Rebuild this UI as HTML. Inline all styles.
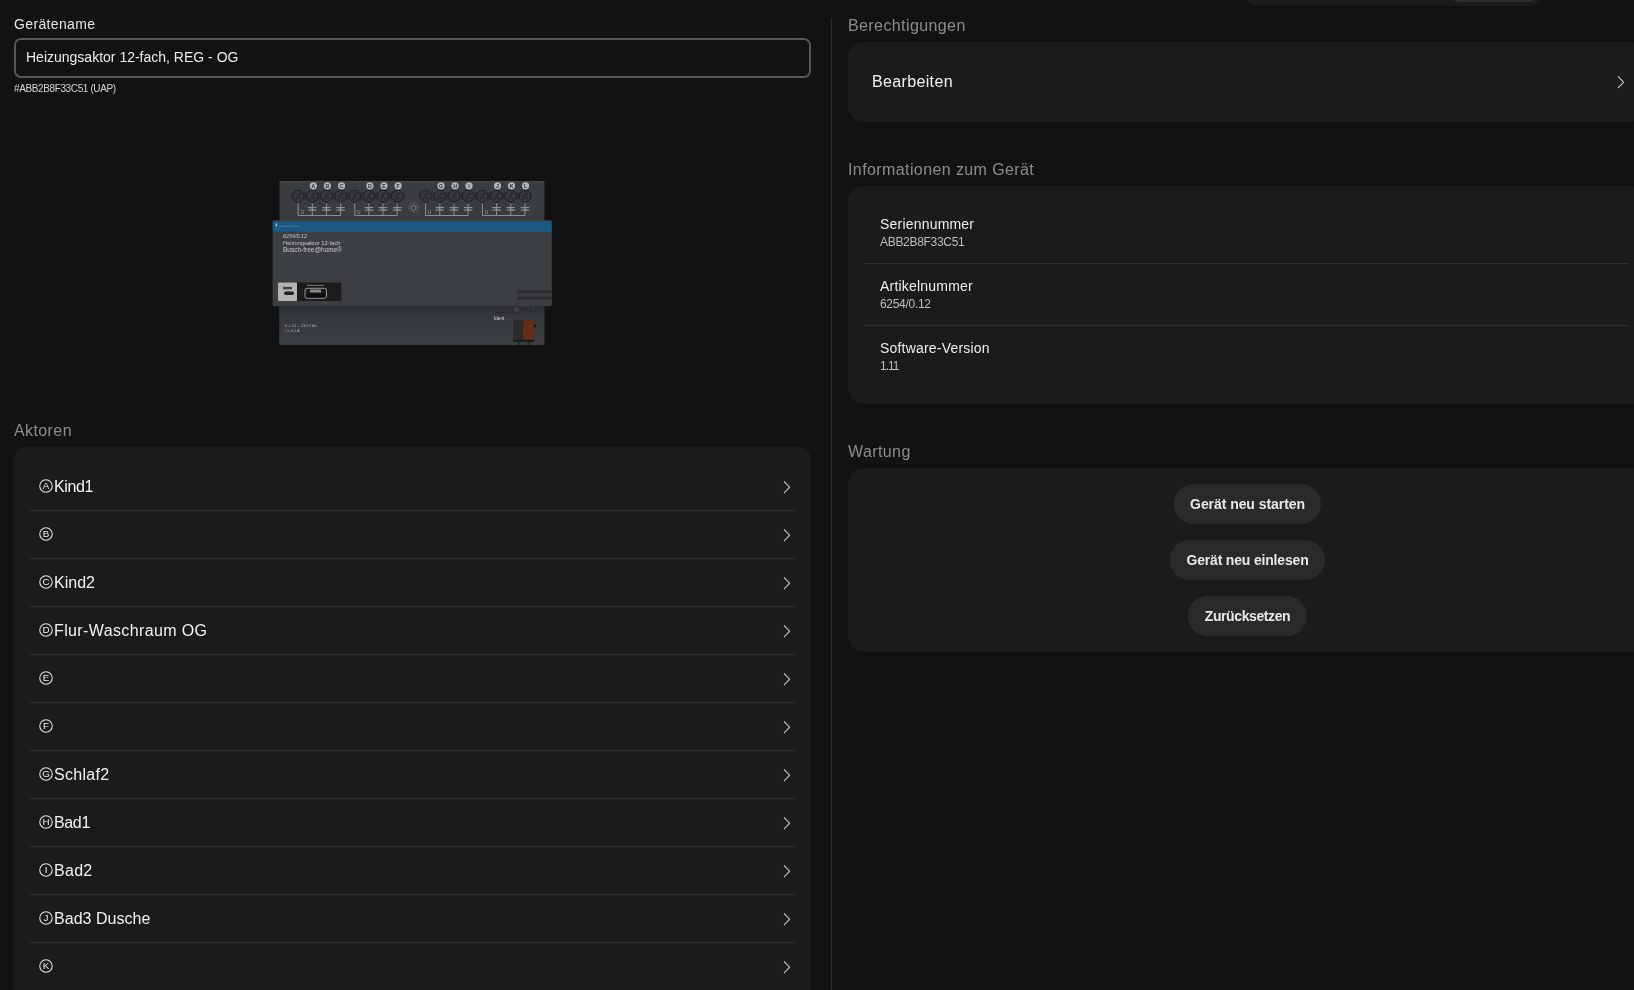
<!DOCTYPE html>
<html><head><meta charset="utf-8">
<style>
*{margin:0;padding:0;box-sizing:border-box}
html,body{width:1634px;height:990px;overflow:hidden;background:#121212;-webkit-font-smoothing:antialiased;font-family:"Liberation Sans",sans-serif;color:#eeeeee}
.abs{position:absolute}
.lbl{position:absolute;font-size:16px;color:#8c8c8c;white-space:nowrap;line-height:1;letter-spacing:0.4px}
.card{position:absolute;background:#1b1b1b;border-radius:16px}
.sep{position:absolute;height:1px;background:#2f2f2f}
.row{position:absolute;left:54px;font-size:16px;color:#f2f2f2;white-space:nowrap;line-height:1}
.btn{position:absolute;height:40px;border-radius:20px;background:#2a2a2a;color:#e8e8e8;font-size:14px;font-weight:bold;line-height:40px;text-align:center;white-space:nowrap}
.t1{position:absolute;left:880px;font-size:14px;color:#eeeeee;white-space:nowrap;line-height:1;letter-spacing:0.2px}
.t2{position:absolute;left:880px;font-size:12px;color:#bdbdbd;white-space:nowrap;line-height:1;letter-spacing:-0.3px}
</style></head><body>
<div id="wrap" style="position:absolute;left:0;top:0;width:1634px;height:990px;will-change:transform">
<div class="abs" style="left:1243px;top:-40px;width:300px;height:46px;border-radius:14px;background:#1a1a1a"></div>
<div class="abs" style="left:1449px;top:-30px;width:90px;height:32px;border-radius:10px;background:#2c2c2c"></div>
<div class="lbl" style="left:14px;top:17px;color:#e6e6e6;font-size:14px;letter-spacing:0.35px">Gerätename</div>
<div class="abs" style="left:14px;top:38px;width:797px;height:40px;border:2px solid #565656;border-radius:7px"></div>
<div class="abs" style="left:26px;top:50px;font-size:14px;color:#ececec;white-space:nowrap;line-height:1">Heizungsaktor 12-fach, REG - OG</div>
<div class="abs" style="left:14px;top:84px;font-size:10px;color:#d4d4d4;white-space:nowrap;line-height:1;letter-spacing:-0.38px">#ABB2B8F33C51 (UAP)</div>
<svg class="abs" style="left:260px;top:170px" width="300" height="185" viewBox="260 170 300 185">
<defs><linearGradient id="gb" x1="0" y1="0" x2="0" y2="1"><stop offset="0" stop-color="#2c2f31"/><stop offset="0.18" stop-color="#2e3133"/><stop offset="0.45" stop-color="#373a3d"/><stop offset="1" stop-color="#3b3e41"/></linearGradient><linearGradient id="gt" x1="0" y1="0" x2="0" y2="1"><stop offset="0" stop-color="#3a3d40"/><stop offset="1" stop-color="#393c3f"/></linearGradient></defs>
<rect x="279.6" y="180.9" width="264.8" height="42" rx="1.5" fill="url(#gt)"/>
<rect x="279.6" y="181" width="264.8" height="1.5" fill="#45484b"/>
<rect x="279.2" y="300" width="265.2" height="45" rx="1.5" fill="url(#gb)"/>
<rect x="291" y="192.6" width="114.5" height="7" rx="3" fill="#2e3032"/>
<rect x="419" y="192.6" width="113" height="7" rx="3" fill="#2e3032"/>
<circle cx="298.2" cy="196.1" r="5.8" fill="#36383a" stroke="#1f2123" stroke-width="1"/>
<path d="M295.6 199.8 L299.2 193.6 H301.2" fill="none" stroke="#1d1f21" stroke-width="1"/>
<path d="M298.7 197 L300.7 199.5" stroke="#1d1f21" stroke-width="0.9"/>
<circle cx="312.3" cy="196.1" r="5.8" fill="#36383a" stroke="#1f2123" stroke-width="1"/>
<path d="M309.7 199.8 L313.3 193.6 H315.3" fill="none" stroke="#1d1f21" stroke-width="1"/>
<path d="M312.8 197 L314.8 199.5" stroke="#1d1f21" stroke-width="0.9"/>
<circle cx="326.5" cy="196.1" r="5.8" fill="#36383a" stroke="#1f2123" stroke-width="1"/>
<path d="M323.9 199.8 L327.5 193.6 H329.5" fill="none" stroke="#1d1f21" stroke-width="1"/>
<path d="M327.0 197 L329.0 199.5" stroke="#1d1f21" stroke-width="0.9"/>
<circle cx="340.6" cy="196.1" r="5.8" fill="#36383a" stroke="#1f2123" stroke-width="1"/>
<path d="M338.0 199.8 L341.6 193.6 H343.6" fill="none" stroke="#1d1f21" stroke-width="1"/>
<path d="M341.1 197 L343.1 199.5" stroke="#1d1f21" stroke-width="0.9"/>
<circle cx="354.8" cy="196.1" r="5.8" fill="#36383a" stroke="#1f2123" stroke-width="1"/>
<path d="M352.2 199.8 L355.8 193.6 H357.8" fill="none" stroke="#1d1f21" stroke-width="1"/>
<path d="M355.3 197 L357.3 199.5" stroke="#1d1f21" stroke-width="0.9"/>
<circle cx="368.9" cy="196.1" r="5.8" fill="#36383a" stroke="#1f2123" stroke-width="1"/>
<path d="M366.3 199.8 L369.9 193.6 H371.9" fill="none" stroke="#1d1f21" stroke-width="1"/>
<path d="M369.4 197 L371.4 199.5" stroke="#1d1f21" stroke-width="0.9"/>
<circle cx="383.0" cy="196.1" r="5.8" fill="#36383a" stroke="#1f2123" stroke-width="1"/>
<path d="M380.4 199.8 L384.0 193.6 H386.0" fill="none" stroke="#1d1f21" stroke-width="1"/>
<path d="M383.5 197 L385.5 199.5" stroke="#1d1f21" stroke-width="0.9"/>
<circle cx="397.2" cy="196.1" r="5.8" fill="#36383a" stroke="#1f2123" stroke-width="1"/>
<path d="M394.6 199.8 L398.2 193.6 H400.2" fill="none" stroke="#1d1f21" stroke-width="1"/>
<path d="M397.7 197 L399.7 199.5" stroke="#1d1f21" stroke-width="0.9"/>
<circle cx="425.6" cy="196.1" r="5.8" fill="#36383a" stroke="#1f2123" stroke-width="1"/>
<path d="M423.0 199.8 L426.6 193.6 H428.6" fill="none" stroke="#1d1f21" stroke-width="1"/>
<path d="M426.1 197 L428.1 199.5" stroke="#1d1f21" stroke-width="0.9"/>
<circle cx="439.8" cy="196.1" r="5.8" fill="#36383a" stroke="#1f2123" stroke-width="1"/>
<path d="M437.2 199.8 L440.8 193.6 H442.8" fill="none" stroke="#1d1f21" stroke-width="1"/>
<path d="M440.3 197 L442.3 199.5" stroke="#1d1f21" stroke-width="0.9"/>
<circle cx="454.0" cy="196.1" r="5.8" fill="#36383a" stroke="#1f2123" stroke-width="1"/>
<path d="M451.4 199.8 L455.0 193.6 H457.0" fill="none" stroke="#1d1f21" stroke-width="1"/>
<path d="M454.5 197 L456.5 199.5" stroke="#1d1f21" stroke-width="0.9"/>
<circle cx="468.2" cy="196.1" r="5.8" fill="#36383a" stroke="#1f2123" stroke-width="1"/>
<path d="M465.6 199.8 L469.2 193.6 H471.2" fill="none" stroke="#1d1f21" stroke-width="1"/>
<path d="M468.7 197 L470.7 199.5" stroke="#1d1f21" stroke-width="0.9"/>
<circle cx="482.4" cy="196.1" r="5.8" fill="#36383a" stroke="#1f2123" stroke-width="1"/>
<path d="M479.8 199.8 L483.4 193.6 H485.4" fill="none" stroke="#1d1f21" stroke-width="1"/>
<path d="M482.9 197 L484.9 199.5" stroke="#1d1f21" stroke-width="0.9"/>
<circle cx="496.6" cy="196.1" r="5.8" fill="#36383a" stroke="#1f2123" stroke-width="1"/>
<path d="M494.0 199.8 L497.6 193.6 H499.6" fill="none" stroke="#1d1f21" stroke-width="1"/>
<path d="M497.1 197 L499.1 199.5" stroke="#1d1f21" stroke-width="0.9"/>
<circle cx="510.8" cy="196.1" r="5.8" fill="#36383a" stroke="#1f2123" stroke-width="1"/>
<path d="M508.2 199.8 L511.8 193.6 H513.8" fill="none" stroke="#1d1f21" stroke-width="1"/>
<path d="M511.3 197 L513.3 199.5" stroke="#1d1f21" stroke-width="0.9"/>
<circle cx="525.0" cy="196.1" r="5.8" fill="#36383a" stroke="#1f2123" stroke-width="1"/>
<path d="M522.4 199.8 L526.0 193.6 H528.0" fill="none" stroke="#1d1f21" stroke-width="1"/>
<path d="M525.5 197 L527.5 199.5" stroke="#1d1f21" stroke-width="0.9"/>
<circle cx="313.4" cy="185.8" r="3.6" fill="#b4b5b6"/>
<text x="313.4" y="187.9" text-anchor="middle" font-family="Liberation Sans" font-weight="bold" font-size="5.2" fill="#2e3032">A</text>
<circle cx="327.4" cy="185.8" r="3.6" fill="#b4b5b6"/>
<text x="327.4" y="187.9" text-anchor="middle" font-family="Liberation Sans" font-weight="bold" font-size="5.2" fill="#2e3032">B</text>
<circle cx="341.6" cy="185.8" r="3.6" fill="#b4b5b6"/>
<text x="341.6" y="187.9" text-anchor="middle" font-family="Liberation Sans" font-weight="bold" font-size="5.2" fill="#2e3032">C</text>
<circle cx="369.9" cy="185.8" r="3.6" fill="#b4b5b6"/>
<text x="369.9" y="187.9" text-anchor="middle" font-family="Liberation Sans" font-weight="bold" font-size="5.2" fill="#2e3032">D</text>
<circle cx="384" cy="185.8" r="3.6" fill="#b4b5b6"/>
<text x="384" y="187.9" text-anchor="middle" font-family="Liberation Sans" font-weight="bold" font-size="5.2" fill="#2e3032">E</text>
<circle cx="398.1" cy="185.8" r="3.6" fill="#b4b5b6"/>
<text x="398.1" y="187.9" text-anchor="middle" font-family="Liberation Sans" font-weight="bold" font-size="5.2" fill="#2e3032">F</text>
<circle cx="441" cy="185.8" r="3.6" fill="#b4b5b6"/>
<text x="441" y="187.9" text-anchor="middle" font-family="Liberation Sans" font-weight="bold" font-size="5.2" fill="#2e3032">G</text>
<circle cx="455" cy="185.8" r="3.6" fill="#b4b5b6"/>
<text x="455" y="187.9" text-anchor="middle" font-family="Liberation Sans" font-weight="bold" font-size="5.2" fill="#2e3032">H</text>
<circle cx="469" cy="185.8" r="3.6" fill="#b4b5b6"/>
<text x="469" y="187.9" text-anchor="middle" font-family="Liberation Sans" font-weight="bold" font-size="5.2" fill="#2e3032">I</text>
<circle cx="497.5" cy="185.8" r="3.6" fill="#b4b5b6"/>
<text x="497.5" y="187.9" text-anchor="middle" font-family="Liberation Sans" font-weight="bold" font-size="5.2" fill="#2e3032">J</text>
<circle cx="511.5" cy="185.8" r="3.6" fill="#b4b5b6"/>
<text x="511.5" y="187.9" text-anchor="middle" font-family="Liberation Sans" font-weight="bold" font-size="5.2" fill="#2e3032">K</text>
<circle cx="525.6" cy="185.8" r="3.6" fill="#b4b5b6"/>
<text x="525.6" y="187.9" text-anchor="middle" font-family="Liberation Sans" font-weight="bold" font-size="5.2" fill="#2e3032">L</text>
<path d="M298.2 203.5 V215.5 H340.6" fill="none" stroke="#9fa1a3" stroke-width="0.8"/>
<path d="M312.3 203.5 V215.5" stroke="#9fa1a3" stroke-width="0.8"/>
<path d="M308.0 207.6 H316.6 M308.0 210.2 H316.6" stroke="#9fa1a3" stroke-width="0.9"/>
<path d="M309.8 208.6 L314.8 209.4" stroke="#9fa1a3" stroke-width="0.5"/>
<path d="M326.5 203.5 V215.5" stroke="#9fa1a3" stroke-width="0.8"/>
<path d="M322.2 207.6 H330.8 M322.2 210.2 H330.8" stroke="#9fa1a3" stroke-width="0.9"/>
<path d="M324.0 208.6 L329.0 209.4" stroke="#9fa1a3" stroke-width="0.5"/>
<path d="M340.6 203.5 V215.5" stroke="#9fa1a3" stroke-width="0.8"/>
<path d="M336.3 207.6 H344.9 M336.3 210.2 H344.9" stroke="#9fa1a3" stroke-width="0.9"/>
<path d="M338.1 208.6 L343.1 209.4" stroke="#9fa1a3" stroke-width="0.5"/>
<text x="300.7" y="213.5" font-family="Liberation Sans" font-size="4.5" fill="#9fa1a3">U</text>
<path d="M354.8 203.5 V215.5 H397.2" fill="none" stroke="#9fa1a3" stroke-width="0.8"/>
<path d="M368.9 203.5 V215.5" stroke="#9fa1a3" stroke-width="0.8"/>
<path d="M364.6 207.6 H373.2 M364.6 210.2 H373.2" stroke="#9fa1a3" stroke-width="0.9"/>
<path d="M366.4 208.6 L371.4 209.4" stroke="#9fa1a3" stroke-width="0.5"/>
<path d="M383.0 203.5 V215.5" stroke="#9fa1a3" stroke-width="0.8"/>
<path d="M378.7 207.6 H387.3 M378.7 210.2 H387.3" stroke="#9fa1a3" stroke-width="0.9"/>
<path d="M380.5 208.6 L385.5 209.4" stroke="#9fa1a3" stroke-width="0.5"/>
<path d="M397.2 203.5 V215.5" stroke="#9fa1a3" stroke-width="0.8"/>
<path d="M392.9 207.6 H401.5 M392.9 210.2 H401.5" stroke="#9fa1a3" stroke-width="0.9"/>
<path d="M394.7 208.6 L399.7 209.4" stroke="#9fa1a3" stroke-width="0.5"/>
<text x="357.3" y="213.5" font-family="Liberation Sans" font-size="4.5" fill="#9fa1a3">U</text>
<path d="M425.6 203.5 V215.5 H468.2" fill="none" stroke="#9fa1a3" stroke-width="0.8"/>
<path d="M439.8 203.5 V215.5" stroke="#9fa1a3" stroke-width="0.8"/>
<path d="M435.5 207.6 H444.1 M435.5 210.2 H444.1" stroke="#9fa1a3" stroke-width="0.9"/>
<path d="M437.3 208.6 L442.3 209.4" stroke="#9fa1a3" stroke-width="0.5"/>
<path d="M454.0 203.5 V215.5" stroke="#9fa1a3" stroke-width="0.8"/>
<path d="M449.7 207.6 H458.3 M449.7 210.2 H458.3" stroke="#9fa1a3" stroke-width="0.9"/>
<path d="M451.5 208.6 L456.5 209.4" stroke="#9fa1a3" stroke-width="0.5"/>
<path d="M468.2 203.5 V215.5" stroke="#9fa1a3" stroke-width="0.8"/>
<path d="M463.9 207.6 H472.5 M463.9 210.2 H472.5" stroke="#9fa1a3" stroke-width="0.9"/>
<path d="M465.7 208.6 L470.7 209.4" stroke="#9fa1a3" stroke-width="0.5"/>
<text x="428.1" y="213.5" font-family="Liberation Sans" font-size="4.5" fill="#9fa1a3">U</text>
<path d="M482.4 203.5 V215.5 H525.0" fill="none" stroke="#9fa1a3" stroke-width="0.8"/>
<path d="M496.6 203.5 V215.5" stroke="#9fa1a3" stroke-width="0.8"/>
<path d="M492.3 207.6 H500.9 M492.3 210.2 H500.9" stroke="#9fa1a3" stroke-width="0.9"/>
<path d="M494.1 208.6 L499.1 209.4" stroke="#9fa1a3" stroke-width="0.5"/>
<path d="M510.8 203.5 V215.5" stroke="#9fa1a3" stroke-width="0.8"/>
<path d="M506.5 207.6 H515.1 M506.5 210.2 H515.1" stroke="#9fa1a3" stroke-width="0.9"/>
<path d="M508.3 208.6 L513.3 209.4" stroke="#9fa1a3" stroke-width="0.5"/>
<path d="M525.0 203.5 V215.5" stroke="#9fa1a3" stroke-width="0.8"/>
<path d="M520.7 207.6 H529.3 M520.7 210.2 H529.3" stroke="#9fa1a3" stroke-width="0.9"/>
<path d="M522.5 208.6 L527.5 209.4" stroke="#9fa1a3" stroke-width="0.5"/>
<text x="484.9" y="213.5" font-family="Liberation Sans" font-size="4.5" fill="#9fa1a3">U</text>
<circle cx="413.6" cy="207.5" r="4.6" fill="none" stroke="#8e9092" stroke-width="0.7" stroke-dasharray="1 0.8"/>
<circle cx="413.6" cy="207.8" r="2.4" fill="none" stroke="#9a9c9e" stroke-width="0.7"/>
<rect x="272.6" y="220.2" width="279.2" height="86" rx="1.6" fill="#3c3f42"/>
<rect x="272.8" y="221.4" width="278.8" height="10.3" fill="#195a84"/>
<rect x="275.6" y="223.2" width="1.6" height="3.6" rx="0.8" fill="#a9bccb"/>
<path d="M275.6 228.3 L276.4 229.4 L277.2 228.3" fill="none" stroke="#a9bccb" stroke-width="0.4"/>
<path d="M279 226.3 H300" stroke="#6d8ea6" stroke-width="1.1" stroke-dasharray="0.9 0.6 1.4 0.7 0.6 1.2"/>
<text x="283" y="237.6" font-family="Liberation Sans" font-size="5.4" font-style="italic" fill="#c6c7c8">6254/0.12</text>
<text x="283" y="244.6" font-family="Liberation Sans" font-size="5.75" fill="#c6c7c8">Heizungsaktor 12-fach</text>
<text x="283" y="251.6" font-family="Liberation Sans" font-size="6.5" fill="#c6c7c8">Busch-free@home®</text>
<rect x="278" y="282.5" width="63.4" height="18.6" rx="1" fill="#1b1c1d"/>
<rect x="278" y="282.5" width="19" height="18.6" rx="1" fill="#b3b3b3"/>
<rect x="284" y="291.5" width="10" height="3.5" rx="1.7" fill="#202020"/>
<rect x="283" y="286.8" width="9" height="2.5" fill="#444"/>
<rect x="305" y="288.3" width="21.5" height="10" rx="2" fill="#1b1c1d" stroke="#c8c8c8" stroke-width="0.7"/>
<rect x="306.5" y="293.5" width="18.5" height="4" rx="1" fill="#0d0d0d"/>
<rect x="310" y="289.5" width="11" height="3" fill="#8a8a8a"/>
<rect x="307" y="284.8" width="17" height="1.2" fill="#666"/>
<rect x="517" y="290" width="34.5" height="10.4" fill="#3b3e41"/>
<rect x="517" y="290.3" width="34.5" height="3" fill="#2b2d2f"/>
<rect x="517" y="296.6" width="34.5" height="3" fill="#2b2d2f"/>
<path d="M494 312.5 H514" stroke="#2a2c2e" stroke-width="1"/>
<circle cx="516.5" cy="309.5" r="3.8" fill="#3a3d3f" stroke="#222426" stroke-width="0.9"/>
<circle cx="533.2" cy="309.3" r="2.3" fill="#393c3e" stroke="#26282a" stroke-width="0.8"/>
<text x="494" y="319.8" font-family="Liberation Sans" font-size="4.6" fill="#d8d8d8">Ident</text>
<rect x="513.1" y="320.4" width="10.4" height="21.1" fill="#2a2a2a"/>
<rect x="523.3" y="320.4" width="10.7" height="19.5" fill="#6a2a19"/>
<rect x="513.1" y="339.8" width="20.9" height="2" fill="#1a1a1a"/>
<path d="M534 324 L537 326 L534 328 Z" fill="#151515"/>
<rect x="518" y="341.5" width="2.2" height="3.3" fill="#1e2a24"/>
<rect x="527.8" y="341.5" width="2.2" height="3.3" fill="#1e2a24"/>
<path d="M505 326 H512" stroke="#2c2e30" stroke-width="0.5"/>
<text x="284.6" y="326.7" font-family="Liberation Sans" font-size="3.8" fill="#a8aaac">U  = 24 ... 230 V AC</text>
<text x="285.5" y="331.5" font-family="Liberation Sans" font-size="3.8" fill="#a8aaac">I  = 0,5 A</text>
</svg>
<div class="lbl" style="left:14px;top:423px">Aktoren</div>
<div class="card" style="left:14px;top:447px;width:797px;height:600px;border-radius:13px"></div>
<svg class="abs" style="left:37.9px;top:477.6px" width="16" height="16" viewBox="0 0 16 16"><circle cx="8" cy="8" r="6.25" fill="none" stroke="#e8e8e8" stroke-width="1.05"/><text x="8" y="11.3" text-anchor="middle" font-family="Liberation Sans" font-size="9.8" fill="#f0f0f0">A</text></svg>
<div class="row" style="top:479px;letter-spacing:-0.4px">Kind1</div>
<svg class="abs" style="left:783px;top:479.5px" width="9" height="15" viewBox="0 0 9 15"><path d="M1.3 1.7 L6.6 7.3 L1.3 12.7" fill="none" stroke="#cacaca" stroke-width="1.1" stroke-linecap="round" stroke-linejoin="round"/></svg>
<div class="sep" style="left:30px;top:510px;width:765px"></div>
<svg class="abs" style="left:37.9px;top:525.6px" width="16" height="16" viewBox="0 0 16 16"><circle cx="8" cy="8" r="6.25" fill="none" stroke="#e8e8e8" stroke-width="1.05"/><text x="8" y="11.3" text-anchor="middle" font-family="Liberation Sans" font-size="9.8" fill="#f0f0f0">B</text></svg>
<svg class="abs" style="left:783px;top:527.5px" width="9" height="15" viewBox="0 0 9 15"><path d="M1.3 1.7 L6.6 7.3 L1.3 12.7" fill="none" stroke="#cacaca" stroke-width="1.1" stroke-linecap="round" stroke-linejoin="round"/></svg>
<div class="sep" style="left:30px;top:558px;width:765px"></div>
<svg class="abs" style="left:37.9px;top:573.6px" width="16" height="16" viewBox="0 0 16 16"><circle cx="8" cy="8" r="6.25" fill="none" stroke="#e8e8e8" stroke-width="1.05"/><text x="8" y="11.3" text-anchor="middle" font-family="Liberation Sans" font-size="9.8" fill="#f0f0f0">C</text></svg>
<div class="row" style="top:575px;letter-spacing:0.0px">Kind2</div>
<svg class="abs" style="left:783px;top:575.5px" width="9" height="15" viewBox="0 0 9 15"><path d="M1.3 1.7 L6.6 7.3 L1.3 12.7" fill="none" stroke="#cacaca" stroke-width="1.1" stroke-linecap="round" stroke-linejoin="round"/></svg>
<div class="sep" style="left:30px;top:606px;width:765px"></div>
<svg class="abs" style="left:37.9px;top:621.6px" width="16" height="16" viewBox="0 0 16 16"><circle cx="8" cy="8" r="6.25" fill="none" stroke="#e8e8e8" stroke-width="1.05"/><text x="8" y="11.3" text-anchor="middle" font-family="Liberation Sans" font-size="9.8" fill="#f0f0f0">D</text></svg>
<div class="row" style="top:623px;letter-spacing:0.38px">Flur-Waschraum OG</div>
<svg class="abs" style="left:783px;top:623.5px" width="9" height="15" viewBox="0 0 9 15"><path d="M1.3 1.7 L6.6 7.3 L1.3 12.7" fill="none" stroke="#cacaca" stroke-width="1.1" stroke-linecap="round" stroke-linejoin="round"/></svg>
<div class="sep" style="left:30px;top:654px;width:765px"></div>
<svg class="abs" style="left:37.9px;top:669.6px" width="16" height="16" viewBox="0 0 16 16"><circle cx="8" cy="8" r="6.25" fill="none" stroke="#e8e8e8" stroke-width="1.05"/><text x="8" y="11.3" text-anchor="middle" font-family="Liberation Sans" font-size="9.8" fill="#f0f0f0">E</text></svg>
<svg class="abs" style="left:783px;top:671.5px" width="9" height="15" viewBox="0 0 9 15"><path d="M1.3 1.7 L6.6 7.3 L1.3 12.7" fill="none" stroke="#cacaca" stroke-width="1.1" stroke-linecap="round" stroke-linejoin="round"/></svg>
<div class="sep" style="left:30px;top:702px;width:765px"></div>
<svg class="abs" style="left:37.9px;top:717.6px" width="16" height="16" viewBox="0 0 16 16"><circle cx="8" cy="8" r="6.25" fill="none" stroke="#e8e8e8" stroke-width="1.05"/><text x="8" y="11.3" text-anchor="middle" font-family="Liberation Sans" font-size="9.8" fill="#f0f0f0">F</text></svg>
<svg class="abs" style="left:783px;top:719.5px" width="9" height="15" viewBox="0 0 9 15"><path d="M1.3 1.7 L6.6 7.3 L1.3 12.7" fill="none" stroke="#cacaca" stroke-width="1.1" stroke-linecap="round" stroke-linejoin="round"/></svg>
<div class="sep" style="left:30px;top:750px;width:765px"></div>
<svg class="abs" style="left:37.9px;top:765.6px" width="16" height="16" viewBox="0 0 16 16"><circle cx="8" cy="8" r="6.25" fill="none" stroke="#e8e8e8" stroke-width="1.05"/><text x="8" y="11.3" text-anchor="middle" font-family="Liberation Sans" font-size="9.8" fill="#f0f0f0">G</text></svg>
<div class="row" style="top:767px;letter-spacing:0.28px">Schlaf2</div>
<svg class="abs" style="left:783px;top:767.5px" width="9" height="15" viewBox="0 0 9 15"><path d="M1.3 1.7 L6.6 7.3 L1.3 12.7" fill="none" stroke="#cacaca" stroke-width="1.1" stroke-linecap="round" stroke-linejoin="round"/></svg>
<div class="sep" style="left:30px;top:798px;width:765px"></div>
<svg class="abs" style="left:37.9px;top:813.6px" width="16" height="16" viewBox="0 0 16 16"><circle cx="8" cy="8" r="6.25" fill="none" stroke="#e8e8e8" stroke-width="1.05"/><text x="8" y="11.3" text-anchor="middle" font-family="Liberation Sans" font-size="9.8" fill="#f0f0f0">H</text></svg>
<div class="row" style="top:815px;letter-spacing:-0.35px">Bad1</div>
<svg class="abs" style="left:783px;top:815.5px" width="9" height="15" viewBox="0 0 9 15"><path d="M1.3 1.7 L6.6 7.3 L1.3 12.7" fill="none" stroke="#cacaca" stroke-width="1.1" stroke-linecap="round" stroke-linejoin="round"/></svg>
<div class="sep" style="left:30px;top:846px;width:765px"></div>
<svg class="abs" style="left:37.9px;top:861.6px" width="16" height="16" viewBox="0 0 16 16"><circle cx="8" cy="8" r="6.25" fill="none" stroke="#e8e8e8" stroke-width="1.05"/><text x="8" y="11.3" text-anchor="middle" font-family="Liberation Sans" font-size="9.8" fill="#f0f0f0">I</text></svg>
<div class="row" style="top:863px;letter-spacing:0.3px">Bad2</div>
<svg class="abs" style="left:783px;top:863.5px" width="9" height="15" viewBox="0 0 9 15"><path d="M1.3 1.7 L6.6 7.3 L1.3 12.7" fill="none" stroke="#cacaca" stroke-width="1.1" stroke-linecap="round" stroke-linejoin="round"/></svg>
<div class="sep" style="left:30px;top:894px;width:765px"></div>
<svg class="abs" style="left:37.9px;top:909.6px" width="16" height="16" viewBox="0 0 16 16"><circle cx="8" cy="8" r="6.25" fill="none" stroke="#e8e8e8" stroke-width="1.05"/><text x="8" y="11.3" text-anchor="middle" font-family="Liberation Sans" font-size="9.8" fill="#f0f0f0">J</text></svg>
<div class="row" style="top:911px;letter-spacing:0.03px">Bad3 Dusche</div>
<svg class="abs" style="left:783px;top:911.5px" width="9" height="15" viewBox="0 0 9 15"><path d="M1.3 1.7 L6.6 7.3 L1.3 12.7" fill="none" stroke="#cacaca" stroke-width="1.1" stroke-linecap="round" stroke-linejoin="round"/></svg>
<div class="sep" style="left:30px;top:942px;width:765px"></div>
<svg class="abs" style="left:37.9px;top:957.6px" width="16" height="16" viewBox="0 0 16 16"><circle cx="8" cy="8" r="6.25" fill="none" stroke="#e8e8e8" stroke-width="1.05"/><text x="8" y="11.3" text-anchor="middle" font-family="Liberation Sans" font-size="9.8" fill="#f0f0f0">K</text></svg>
<svg class="abs" style="left:783px;top:959.5px" width="9" height="15" viewBox="0 0 9 15"><path d="M1.3 1.7 L6.6 7.3 L1.3 12.7" fill="none" stroke="#cacaca" stroke-width="1.1" stroke-linecap="round" stroke-linejoin="round"/></svg>
<div class="abs" style="left:831px;top:18px;width:1px;height:972px;background:#2a2a2a"></div>
<div class="lbl" style="left:848px;top:18px">Berechtigungen</div>
<div class="card" style="left:848px;top:42px;width:800px;height:80px"></div>
<div class="abs" style="left:872px;top:74px;font-size:16px;color:#f2f2f2;white-space:nowrap;line-height:1;letter-spacing:0.35px">Bearbeiten</div>
<svg class="abs" style="left:1617px;top:74.5px" width="9" height="15" viewBox="0 0 9 15"><path d="M1.3 1.7 L6.6 7.3 L1.3 12.7" fill="none" stroke="#cacaca" stroke-width="1.1" stroke-linecap="round" stroke-linejoin="round"/></svg>
<div class="lbl" style="left:848px;top:162px">Informationen zum Gerät</div>
<div class="card" style="left:848px;top:186px;width:800px;height:217.5px"></div>
<div class="t1" style="top:217px">Seriennummer</div>
<div class="t2" style="top:236px">ABB2B8F33C51</div>
<div class="sep" style="left:864px;top:263px;width:765px"></div>
<div class="t1" style="top:279px">Artikelnummer</div>
<div class="t2" style="top:298px">6254/0.12</div>
<div class="sep" style="left:864px;top:325px;width:765px"></div>
<div class="t1" style="top:341px">Software-Version</div>
<div class="t2" style="top:360px;letter-spacing:-1px">1.11</div>
<div class="lbl" style="left:848px;top:444px">Wartung</div>
<div class="card" style="left:848px;top:468px;width:800px;height:184px"></div>
<div class="btn" style="left:1174px;top:484px;width:147px;letter-spacing:-0.06px">Gerät neu starten</div>
<div class="btn" style="left:1170px;top:540px;width:155px;letter-spacing:-0.18px">Gerät neu einlesen</div>
<div class="btn" style="left:1188px;top:596px;width:119px;letter-spacing:-0.4px">Zurücksetzen</div>
</div>
</body></html>
